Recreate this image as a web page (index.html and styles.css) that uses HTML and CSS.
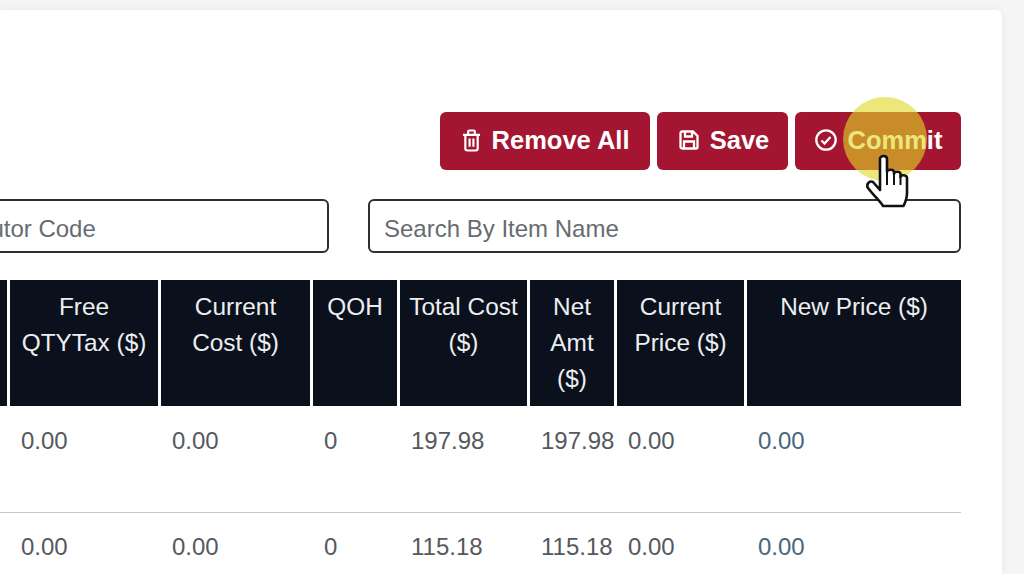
FILE: index.html
```html
<!DOCTYPE html>
<html lang="en">
<head>
<meta charset="utf-8">
<title>Items</title>
<link rel="stylesheet" href="styles.css">
</head>
<body>
<main class="card">
  <div class="actions">
    <button class="btn btn-remove" type="button">
      <svg class="ico ico-trash" viewBox="0 0 20 24" fill="none" stroke="currentColor" stroke-width="2.300"><path d="M1 6h18M6.500 5.500V2.500a1 1 0 0 1 1-1h5a1 1 0 0 1 1 1v3M3.500 6v14.500a2 2 0 0 0 2 2h9a2 2 0 0 0 2-2V6M8 10v8.500M12 10v8.500"/></svg>
      <span>Remove All</span>
    </button>
    <button class="btn btn-save" type="button">
      <svg class="ico ico-save" viewBox="0 0 20 20" fill="none" stroke="currentColor" stroke-width="2.300"><path d="M1.500 3A1.500 1.500 0 0 1 3 1.500h11l4.500 4.500v11a1.500 1.500 0 0 1-1.500 1.500H3A1.500 1.500 0 0 1 1.500 17zM6 1.500v5h7v-5M5 18.500v-7h10v7"/></svg>
      <span>Save</span>
    </button>
    <button class="btn btn-commit" type="button">
      <svg class="ico ico-check" viewBox="0 0 22 22" fill="none" stroke="currentColor" stroke-width="2.300"><circle cx="11" cy="11" r="9.700"/><path d="M6.500 11.500l3 3 6-6.500"/></svg>
      <span>Commit</span>
    </button>
  </div>
  <div class="filters">
    <input class="field field-code" type="text" placeholder="Search By Distributor Code">
    <input class="field field-name" type="text" placeholder="Search By Item Name">
  </div>
  <table class="grid">
    <colgroup>
      <col class="c0"><col class="c1"><col class="c2"><col class="c3"><col class="c4"><col class="c5"><col class="c6"><col class="c7">
    </colgroup>
    <thead>
      <tr>
        <th></th>
        <th>Free QTYTax ($)</th>
        <th>Current Cost ($)</th>
        <th>QOH</th>
        <th>Total Cost ($)</th>
        <th>Net Amt ($)</th>
        <th>Current Price ($)</th>
        <th>New Price ($)</th>
      </tr>
    </thead>
    <tbody>
      <tr class="row-a">
        <td></td><td>0.00</td><td>0.00</td><td>0</td><td>197.98</td><td>197.98</td><td>0.00</td><td class="price">0.00</td>
      </tr>
      <tr class="row-b">
        <td></td><td>0.00</td><td>0.00</td><td>0</td><td>115.18</td><td>115.18</td><td>0.00</td><td class="price">0.00</td>
      </tr>
    </tbody>
  </table>
</main>
<div class="pointer">
  <div class="halo"></div>
  <svg class="hand" viewBox="0 0 44 54"><path d="M14 5c0-4 7-4 7 0v13c0-3 7-3 7 0v2c0-3 6.500-3 6.500 0v3c0-3 6.500-2 6.500 1v15c0 5-1.500 9-3.500 13H17c-3-5-9-10-15-18-2-3 1-8 5-6l7 8z" fill="#fff" stroke="#111" stroke-width="2.600" stroke-linejoin="round"/><path d="M21 18v13M28 20v11M34.500 23v8" fill="none" stroke="#111" stroke-width="2"/></svg>
</div>
</body>
</html>
```
FILE: styles.css
```css
* { box-sizing: border-box; }
html, body { margin: 0; height: 100%; }
body {
  background: #f5f5f5;
  font-family: "Liberation Sans", Arial, sans-serif;
  overflow: hidden;
  position: relative;
}
.card {
  width: 1002px;
  height: 564px;
  margin-top: 10px;
  background: #fff;
  border-top-right-radius: 6px;
  box-shadow: 0 0 8px rgba(0, 0, 0, .06);
  padding: 102px 41px 0 0;
  overflow: hidden;
}
.actions { display: flex; justify-content: flex-end; gap: 7px; }
.btn {
  height: 58px;
  display: flex;
  align-items: center;
  justify-content: center;
  gap: 11px;
  border: 0;
  border-radius: 6px;
  background: #a31530;
  color: #fff;
  font: 700 25.5px "Liberation Sans", Arial, sans-serif;
  padding: 0 0 2px 1px;
}
.btn-remove { width: 210px; }
.btn-save { width: 131px; padding-left: 3px; }
.btn-commit { width: 166px; }
.ico-trash { width: 19px; height: 23px; }
.ico-save { width: 20px; height: 20px; }
.ico-check { width: 22px; height: 22px; }
.filters { display: flex; justify-content: flex-end; gap: 39px; margin-top: 29px; }
.field {
  height: 54px;
  border: 2px solid #2f2f33;
  border-radius: 6px;
  background: #fff;
  padding: 6px 14px 0;
  font: 24px "Liberation Sans", Arial, sans-serif;
  outline: 0;
}
.field::placeholder { color: #666c72; opacity: 1; }
.field-code { flex: 0 0 540px; }
.field-name { flex: 0 0 593px; }
.grid {
  margin: 27px 0 0;
  width: 961px;
  table-layout: fixed;
  border-collapse: separate;
  border-spacing: 0;
  font-size: 24px;
}
.c0 { width: 10px; }
.c1 { width: 151px; }
.c2 { width: 152px; }
.c3 { width: 87px; }
.c4 { width: 130px; }
.c5 { width: 87px; }
.c6 { width: 130px; }
.c7 { width: 214px; }
th {
  height: 126px;
  background: #0b111c;
  color: #eceef0;
  font-size: 24.4px;
  font-weight: 400;
  line-height: 36px;
  padding: 9px 9px 0;
  text-align: center;
  vertical-align: top;
  border-right: 3px solid #fff;
}
th:nth-child(3) { padding: 9px 14px 0; }
th:last-child { border-right: 0; }
td {
  color: #55595e;
  line-height: 36px;
  padding: 0 0 0 11px;
  vertical-align: top;
  white-space: nowrap;
}
.row-a td { height: 107px; padding-top: 17px; border-bottom: 1px solid #c8c8c8; }
.row-a td:first-child, .row-b td:first-child { padding: 0; }
.row-b td { padding-top: 16px; }
td.price { color: #47667d; }
.pointer { position: absolute; left: 843px; top: 97px; width: 84px; height: 116px; }
.halo { width: 84px; height: 84px; border-radius: 50%; background: rgba(224, 215, 37, .61); }
.hand { position: absolute; left: 23px; top: 57px; width: 44px; height: 54px; }
```
